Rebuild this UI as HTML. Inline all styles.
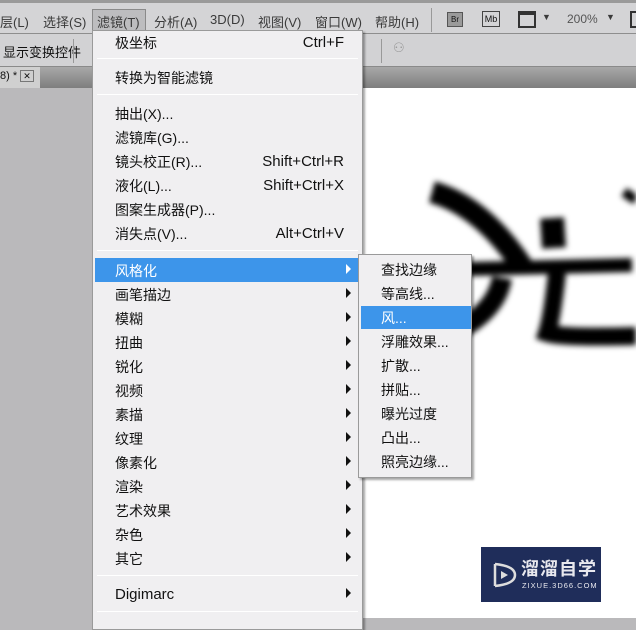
<!DOCTYPE html>
<html><head><meta charset="utf-8"><style>
*{margin:0;padding:0;box-sizing:border-box}
body{width:636px;height:618px;overflow:hidden;position:relative;background:#bab9bb;font-family:"Liberation Sans","Noto Sans CJK SC",sans-serif;font-size:14px;color:#111}
.bar{position:absolute;left:0;width:636px}
#mb{top:0;height:34px;background:#d4d4d6;border-top:3px solid #9a9a9a;border-bottom:1px solid #8e8e8e}
#tb{top:34px;height:33px;background:#d2d2d4;border-bottom:1px solid #8a8a8a}
#tab{top:67px;height:21px;background:linear-gradient(#a8a8a8,#7e7e7e)}
.mi{position:absolute;top:9px;font-size:13px;color:#3a3a3a}
#canvas{position:absolute;left:362px;top:88px;width:274px;height:530px;background:#fff;overflow:hidden}
.menu{position:absolute;background:#f0eff1;border:1px solid #9a9a9a;box-shadow:2px 2px 2px rgba(0,0,0,.35)}
.it{position:absolute;left:22px;font-size:14px;line-height:16px}
.sc{position:absolute;right:18px;font-size:15px;line-height:16px}
.sep{position:absolute;left:4px;right:4px;height:1px;background:#a8a8a8;border-bottom:1px solid #fff}
.ar{position:absolute;left:253px;width:0;height:0;border-top:5px solid transparent;border-bottom:5px solid transparent;border-left:5px solid #111}
.hl{position:absolute;background:#3d95ea}
</style></head><body>
<div class="bar" id="mb">
<span class="mi" style="left:0">层(L)</span>
<span class="mi" style="left:43px">选择(S)</span>
<div style="position:absolute;left:92px;top:6px;width:54px;height:24px;background:#bdbdbf;border:1px solid #8a8a8a"></div>
<span class="mi" style="left:97px">滤镜(T)</span>
<span class="mi" style="left:154px">分析(A)</span>
<span class="mi" style="left:210px">3D(D)</span>
<span class="mi" style="left:258px">视图(V)</span>
<span class="mi" style="left:315px">窗口(W)</span>
<span class="mi" style="left:375px">帮助(H)</span>
<div style="position:absolute;left:431px;top:5px;width:1px;height:24px;background:#999"></div>
<div style="position:absolute;left:447px;top:9px;width:16px;height:15px;background:#9a9a9a;border:1px solid #555;font-size:8px;text-align:center;line-height:13px">Br</div>
<div style="position:absolute;left:482px;top:8px;width:18px;height:16px;border:1px solid #444;font-size:9px;text-align:center;line-height:14px">Mb</div>
<div style="position:absolute;left:518px;top:8px;width:18px;height:17px;border:2px solid #333;border-top-width:4px"></div>
<span class="mi" style="left:542px;font-size:9px">▼</span>
<span class="mi" style="left:567px;font-size:12px;color:#555">200%</span>
<span class="mi" style="left:606px;font-size:9px">▼</span>
<div style="position:absolute;left:630px;top:8px;width:10px;height:17px;border:2px solid #333"></div>
</div>
<div class="bar" id="tb">
<span class="mi" style="left:3px;top:8px;color:#111">显示变换控件</span>
<div style="position:absolute;left:73px;top:5px;width:1px;height:24px;background:#999"></div>
<div style="position:absolute;left:381px;top:5px;width:1px;height:24px;background:#999"></div>
<span class="mi" style="left:393px;top:6px;color:#999">⚇</span>
</div>
<div class="bar" id="tab"><div style="position:absolute;left:0;top:0;width:40px;height:21px;background:#d0d0d0;font-size:11px;padding:3px 0 0 0">8) * <span style="border:1px solid #777;font-size:9px;padding:0 2px">✕</span></div></div>
<div id="canvas">
<svg width="274" height="530" style="filter:blur(3px)">
<g fill="none" stroke="#000" stroke-linecap="butt">
<path d="M70 104 Q120 118 160 178" stroke-width="22"/>
<path d="M105 181 L270 177" stroke-width="14"/>
<path d="M190 130 L192 160" stroke-width="24"/>
<path d="M140 190 Q135 220 100 240" stroke-width="20"/>
<path d="M195 185 Q190 230 185 245 Q200 250 274 248" stroke-width="18"/>
<path d="M262 104 L274 112" stroke-width="10"/>
</g></svg>
<div style="position:absolute;left:119px;top:459px;width:120px;height:55px;background:#1f2d5a;color:#e8e8ee">
<svg width="30" height="30" style="position:absolute;left:8px;top:13px"><path d="M6 4 L6 26 M6 4 Q26 6 26 15 Q26 24 6 26" fill="none" stroke="#ddd" stroke-width="2.5"/><path d="M12 11 L19 15 L12 19Z" fill="#ddd"/></svg>
<div style="position:absolute;left:40px;top:8px;font-size:18px;font-weight:bold;letter-spacing:1px">溜溜自学</div>
<div style="position:absolute;left:41px;top:34px;font-size:7.5px;letter-spacing:1px">ZIXUE.3D66.COM</div>
</div>
</div>
<div class="menu" style="left:92px;top:30px;width:271px;height:600px">
<span class="it" style="top:4px">极坐标</span><span class="sc" style="top:4px">Ctrl+F</span>
<div class="sep" style="top:27px"></div>
<span class="it" style="top:39px">转换为智能滤镜</span>
<div class="sep" style="top:63px"></div>
<span class="it" style="top:75px">抽出(X)...</span>
<span class="it" style="top:99px">滤镜库(G)...</span>
<span class="it" style="top:123px">镜头校正(R)...</span><span class="sc" style="top:123px">Shift+Ctrl+R</span>
<span class="it" style="top:147px">液化(L)...</span><span class="sc" style="top:147px">Shift+Ctrl+X</span>
<span class="it" style="top:171px">图案生成器(P)...</span>
<span class="it" style="top:195px">消失点(V)...</span><span class="sc" style="top:195px">Alt+Ctrl+V</span>
<div class="sep" style="top:219px"></div>
<div class="hl" style="left:2px;top:227px;width:264px;height:24px"></div>
<span class="it" style="top:232px;color:#fff">风格化</span><div class="ar" style="top:233px;border-left-color:#fff"></div>
<span class="it" style="top:256px">画笔描边</span><div class="ar" style="top:257px"></div>
<span class="it" style="top:280px">模糊</span><div class="ar" style="top:281px"></div>
<span class="it" style="top:304px">扭曲</span><div class="ar" style="top:305px"></div>
<span class="it" style="top:328px">锐化</span><div class="ar" style="top:329px"></div>
<span class="it" style="top:352px">视频</span><div class="ar" style="top:353px"></div>
<span class="it" style="top:376px">素描</span><div class="ar" style="top:377px"></div>
<span class="it" style="top:400px">纹理</span><div class="ar" style="top:401px"></div>
<span class="it" style="top:424px">像素化</span><div class="ar" style="top:425px"></div>
<span class="it" style="top:448px">渲染</span><div class="ar" style="top:449px"></div>
<span class="it" style="top:472px">艺术效果</span><div class="ar" style="top:473px"></div>
<span class="it" style="top:496px">杂色</span><div class="ar" style="top:497px"></div>
<span class="it" style="top:520px">其它</span><div class="ar" style="top:521px"></div>
<div class="sep" style="top:544px"></div>
<span class="it" style="top:556px;font-size:15px">Digimarc</span><div class="ar" style="top:557px"></div>
<div class="sep" style="top:580px"></div>
</div>
<div class="menu" style="left:358px;top:254px;width:114px;height:224px">
<span class="it" style="top:7px">查找边缘</span>
<span class="it" style="top:31px">等高线...</span>
<div class="hl" style="left:2px;top:51px;width:110px;height:23px"></div>
<span class="it" style="top:55px;color:#fff">风...</span>
<span class="it" style="top:79px">浮雕效果...</span>
<span class="it" style="top:103px">扩散...</span>
<span class="it" style="top:127px">拼贴...</span>
<span class="it" style="top:151px">曝光过度</span>
<span class="it" style="top:175px">凸出...</span>
<span class="it" style="top:199px">照亮边缘...</span>
</div>
</body></html>
